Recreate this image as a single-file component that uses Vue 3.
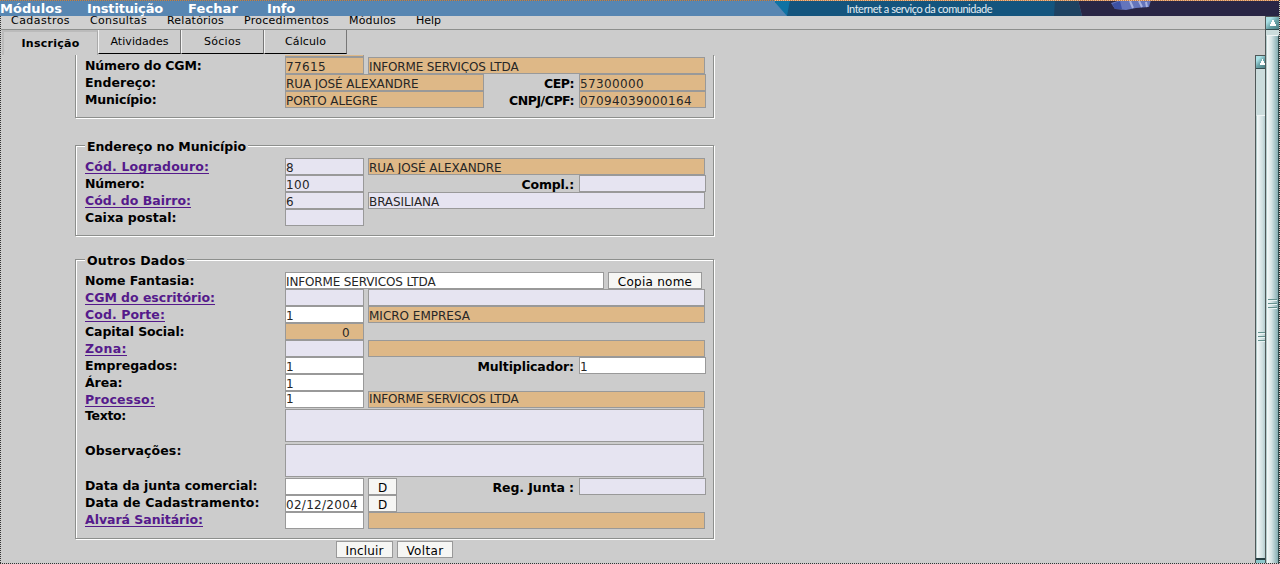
<script setup>
const canvas = document.createElement('canvas').getContext('2d')

// Letter spacing that gives a text the requested advance width.
function fit(text, width, font = '12px "DejaVu Sans"') {
  canvas.font = font
  const gap = (width - canvas.measureText(text).width) / text.length
  return { letterSpacing: gap.toFixed(3) + 'px' }
}
const BOLD = 'bold 12.5px "DejaVu Sans"'
const fitBold = (t, w) => fit(t, w, BOLD)

const modules = [
  { t: 'Módulos', w: 62, c: 'm1' }, { t: 'Instituição', w: 76, c: 'm2' },
  { t: 'Fechar', w: 50, c: 'm3' }, { t: 'Info', w: 28, c: 'm4' },
]
const menu = [
  { t: 'Cadastros', w: 59, c: 'n1' }, { t: 'Consultas', w: 57, c: 'n2' },
  { t: 'Relatórios', w: 57, c: 'n3' }, { t: 'Procedimentos', w: 85, c: 'n4' },
  { t: 'Módulos', w: 47, c: 'n5' }, { t: 'Help', w: 25, c: 'n6' },
]
const tabs = [{ t: 'Atividades', w: 58 }, { t: 'Sócios', w: 37 }, { t: 'Cálculo', w: 41 }]

const groups = [
  {
    cls: 'g1', rows: [
      { l: 'Número do CGM:', w: 116.5, f: [['short tan', '77615', 40], ['wide tan', 'INFORME SERVIÇOS LTDA', 149.5]] },
      { l: 'Endereço:', w: 71, f: [['addr tan', 'RUA JOSÉ ALEXANDRE', 132.5]], side: ['CEP:', 30, 'tan', '57300000', 64] },
      { l: 'Município:', w: 71.5, f: [['addr tan', 'PORTO ALEGRE', 91.5]], side: ['CNPJ/CPF:', 65, 'tan', '07094039000164', 112] },
    ],
  },
  {
    cls: 'g2', legend: 'Endereço no Município', lw: 159, rows: [
      { l: 'Cód. Logradouro:', w: 124, link: true, f: [['short lav', '8', 8], ['wide tan', 'RUA JOSÉ ALEXANDRE', 132.5]] },
      { l: 'Número:', w: 59.5, f: [['short lav', '100', 24]], side: ['Compl.:', 52.5, 'lav', '', 0] },
      { l: 'Cód. do Bairro:', w: 106, link: true, f: [['short lav', '6', 8], ['wide lav', 'BRASILIANA', 70]] },
      { l: 'Caixa postal:', w: 91.5, f: [['short lav', '', 0]] },
    ],
  },
  {
    cls: 'g3', legend: 'Outros Dados', lw: 98, rows: [
      { l: 'Nome Fantasia:', w: 109.5, f: [['name', 'INFORME SERVICOS LTDA', 149.5]], btn: ['Copia nome', 74.5, 'copy'] },
      { l: 'CGM do escritório:', w: 130, link: true, f: [['short lav', '', 0], ['wide lav', '', 0]] },
      { l: 'Cod. Porte:', w: 80, link: true, f: [['short', '1', 8], ['wide tan', 'MICRO EMPRESA', 101]] },
      { l: 'Capital Social:', w: 99.5, f: [['short tan num', '0', 8]] },
      { l: 'Zona:', w: 42, link: true, f: [['short lav', '', 0], ['wide tan', '', 0]] },
      { l: 'Empregados:', w: 92.5, f: [['short', '1', 8]], side: ['Multiplicador:', 96.5, '', '1', 8] },
      { l: 'Área:', w: 37.5, f: [['short', '1', 8]] },
      { l: 'Processo:', w: 70, link: true, cls: 'proc', f: [['short', '1', 8], ['wide tan', 'INFORME SERVICOS LTDA', 149.5]] },
      { l: 'Texto:', w: 41, cls: 'area', f: [['text lav', '', 0]] },
      { l: 'Observações:', w: 96.5, cls: 'area', f: [['text lav', '', 0]] },
      { l: 'Data da junta comercial:', w: 172.5, cls: 'late', f: [['short', '', 0]], btn: ['D', 9, 'date'], side: ['Reg. Junta :', 81.5, 'lav', '', 0] },
      { l: 'Data de Cadastramento:', w: 174.5, cls: 'late', f: [['short', '02/12/2004', 72]], btn: ['D', 9, 'date'] },
      { l: 'Alvará Sanitário:', w: 118, link: true, cls: 'late', f: [['short', '', 0], ['wide tan', '', 0]] },
    ],
  },
]
</script>

<template>
  <div class="page">
    <header class="banner">
      <span v-for="m in modules" :key="m.t" class="mod" :class="m.c" :style="fit(m.t, m.w, 'bold 13px &quot;DejaVu Sans&quot;')">{{ m.t }}</span>
      <svg class="art" width="505" height="16" viewBox="775 0 505 16">
        <path d="M773 0H790V16H787Z" fill="#0f73a4" />
        <path d="M790 0H1060V16H787Z" fill="#14557e" />
        <path d="M1055 0H1078L1082 16H1054Z" fill="#1e4261" />
        <path d="M1078 0H1280V16H1082Z" fill="#292645" />
        <path d="M1111 3L1121 0H1151L1149 7L1136 8L1126 10L1115 9Z" fill="#6475bc" />
        <path d="M1112 4L1120 1L1122 9L1115 9Z" fill="#3c50a3" />
        <path d="M1130 1L1133 8M1139 1L1142 7M1146 2L1147 7" stroke="#a8b3df" stroke-width="2" />
        <path d="M842 .5H935" stroke="#dce8ef" stroke-dasharray="4 5 2 6 5 3" />
        <path d="M942 .5H995" stroke="#2440ee" stroke-dasharray="6 3 3 4" />
      </svg>
      <span class="slogan" :style="fit('Internet a serviço da comunidade', 145.5, '11px Lato')">Internet a serviço da comunidade</span>
      <i class="dots"></i><i class="dots bright"></i>
    </header>

    <nav class="menu">
      <span v-for="m in menu" :key="m.t" :class="m.c" :style="fit(m.t, m.w, '11px &quot;DejaVu Sans&quot;')">{{ m.t }}</span>
    </nav>

    <div class="tabs">
      <div class="tab active"><span :style="fit('Inscrição', 58, 'bold 11px &quot;DejaVu Sans&quot;')">Inscrição</span></div>
      <div v-for="t in tabs" :key="t.t" class="tab"><span :style="fit(t.t, t.w, '11px &quot;DejaVu Sans&quot;')">{{ t.t }}</span></div>
    </div>

    <main class="form">
      <section v-for="g in groups" :key="g.cls" class="group" :class="g.cls">
        <h2 v-if="g.legend" class="legend"><span :style="fitBold(g.legend, g.lw)">{{ g.legend }}</span></h2>
        <div v-else class="previous"><i></i></div>
        <div v-for="r in g.rows" :key="r.l" class="row" :class="r.cls">
          <div class="label"><span :class="{ link: r.link }" :style="fitBold(r.l, r.w)">{{ r.l }}</span></div>
          <div v-for="(f, i) in r.f" :key="i" class="field" :class="f[0]"><span v-if="f[1]" :style="fit(f[1], f[2])">{{ f[1] }}</span></div>
          <button v-if="r.btn" class="btn" :class="r.btn[2]"><span :style="fit(r.btn[0], r.btn[1])">{{ r.btn[0] }}</span></button>
          <div v-if="r.side" class="side">
            <b :style="fitBold(r.side[0], r.side[1])">{{ r.side[0] }}</b>
            <div class="field mid" :class="r.side[2]"><span v-if="r.side[3]" :style="fit(r.side[3], r.side[4])">{{ r.side[3] }}</span></div>
          </div>
        </div>
      </section>
      <div class="actions">
        <button class="btn incluir"><span :style="fit('Incluir', 38)">Incluir</span></button>
        <button class="btn voltar"><span :style="fit('Voltar', 37)">Voltar</span></button>
      </div>
    </main>

    <div class="scroll inner">
      <div class="arrow"><svg width="12" height="12" viewBox="0 0 12 12"><path d="M6 3H7V5H8V7H9V9H4V7H5V5H6Z" fill="#fff" /></svg></div>
      <div class="track"></div>
      <div class="thumb"><i></i><i></i><i></i></div>
      <div class="down"></div>
    </div>
    <div class="scroll outer">
      <div class="arrow"><svg width="13" height="12" viewBox="0 0 13 12"><path d="M6 3H8V5H9V7H10V9H4V7H5V5H6Z" fill="#fff" /></svg></div>
      <div class="track"></div>
      <div class="thumb"><i></i><i></i><i></i></div>
    </div>
    <i class="edge left"></i><i class="edge right"></i><i class="edge bottom"></i>
  </div>
</template>

<style>
body { margin: 0; overflow: hidden; background: #ccc; }
</style>

<style scoped>
.page { position: relative; width: 1280px; height: 564px; overflow: hidden; background: #ccc; color: #000; font: 12px "DejaVu Sans", sans-serif; }
.page * { box-sizing: border-box; }
span, b { white-space: pre; }

.banner { position: relative; display: flex; height: 16px; background: #5786b2; color: #fff; font: bold 13px/18px "DejaVu Sans", sans-serif; }
.m1 { width: 87px; } .m2 { width: 101px; } .m3 { width: 79px; } .m4 { width: 60px; }
.art { position: absolute; right: 0; top: 0; }
.slogan { position: absolute; left: 846.5px; top: 0; font: 11px/17px Lato, sans-serif; color: #e3edf3; }
.dots { position: absolute; inset: 0 0 auto; height: 1px; background: repeating-linear-gradient(90deg, #c68343 0 1px, #5d7590 1px 2px); }
.dots.bright { left: 775px; background: repeating-linear-gradient(90deg, #efb994 0 1px, transparent 1px 2px); }
.dots.bright { mix-blend-mode: normal; }

.menu { display: flex; height: 14px; overflow: hidden; padding-left: 11px; background: #d0d0d0; border-bottom: 1px solid #8d8f8d; font-size: 11px; line-height: 13px; }
.menu span { margin-top: -2px; }
.n1 { width: 79px; } .n2 { width: 77px; } .n3 { width: 77px; } .n4 { width: 105px; } .n5 { width: 67px; }

.tabs { display: flex; height: 25px; padding-left: 2px; }
.tab { width: 83px; height: 24px; border-left: 1px solid #f4f4f4; border-right: 1px solid #777; border-bottom: 1px solid #000; text-align: center; font-size: 11px; line-height: 23px; }
.tab.active { width: 96px; height: 25px; border: 2px solid #bbb; border-right: 1px solid #aaa; border-bottom: 0; font-weight: bold; line-height: 23px; }

.form { width: 640px; height: 508px; margin-left: 75px; overflow: hidden; }
.group { position: relative; border: 1px solid #8d8f8d; margin: 0 1px 1px 0; padding-left: 9px; box-shadow: 1px 1px 0 #fff, inset 1px 1px 0 #fff; }
.g1 { height: 63px; border-top: 0; box-shadow: 1px 1px 0 #fff, inset 1px 0 0 #fff; }
.g2 { height: 91px; margin-top: 27px; padding-top: 12px; }
.g3 { height: 280px; margin-top: 23px; padding-top: 12px; }
.legend { position: absolute; left: 9px; top: -8px; margin: 0; padding: 0 2px; background: #ccc; font-size: 12.5px; line-height: 17px; height: 17px; }
.previous { height: 2px; }
.previous i { display: block; width: 79px; height: 2px; margin-left: 200px; background: linear-gradient(#deb887 50%, #999 50%); border-right: 1px solid #999; }

.row { display: flex; width: 621px; height: 17px; }
.label { width: 200px; font-weight: bold; font-size: 12.5px; line-height: 17px; }
.link { color: #551a8b; text-decoration: underline; text-underline-offset: 2px; text-decoration-thickness: 1px; text-decoration-skip-ink: none; }
.field { height: 17px; border: 1px solid #999; background: #fff; color: #262626; line-height: 18px; overflow: hidden; }
.tan { background: #deb887; }
.lav { background: #e6e4f1; }
.short { width: 79px; margin-right: 4px; }
.wide { width: 337px; }
.addr { width: 199px; }
.name { width: 319px; margin-right: 4px; }
.text { width: 419px; height: 33px; }
.mid { width: 127px; }
.num { text-align: right; padding-right: 13px; }
.side { display: flex; gap: 5px; margin-left: auto; }
.side b { font-size: 12.5px; line-height: 19px; }
.row.area { height: 35px; }
.row.area .label { line-height: 13px; }
.row.proc { height: 18px; }
.row.proc .field { line-height: 14px; }
.row.late .label { line-height: 15px; }
.row.area + .late { margin-top: -1px; }
.btn { height: 17px; padding: 0; border: 1px solid #999; background: #f6f6f4; color: #000; font: 12px/18px "DejaVu Sans", sans-serif; text-align: center; display: block; overflow: hidden; }
.btn span { display: block; }
.copy { width: 94px; }
.date { width: 29px; }
.actions { display: flex; gap: 4px; padding: 1px 0 0 261px; }
.incluir { width: 57px; }
.voltar { width: 56px; }

.scroll { position: absolute; display: flex; flex-direction: column; border-left: 1px solid #505858; border-top: 1px solid #505858; overflow: hidden; background: #cbdcdc; }
.inner { left: 1255px; top: 55px; width: 10px; height: 508px; }
.outer { left: 1265px; top: 16px; width: 14px; height: 548px; }
.arrow { height: 13px; flex: none; border-bottom: 1px solid #354b4f; background: linear-gradient(135deg, #a9e0e5 25%, #6ba3a8 55%, #4c8085); }
.arrow svg { display: block; }
.inner .track { height: 46px; flex: none; }
.outer .track { height: 5px; flex: none; }
.thumb { flex: 1; display: flex; flex-direction: column; gap: 3px; border-left: 1px solid #b4cccc; border-top: 1px solid #f0f5f5; background: linear-gradient(90deg, #f4f8f8, #d7e5e6 40%, #85adb2); }
.inner .thumb { background: linear-gradient(90deg, #f4f8f8, #cfdfe0 70%, #b5cdd0); }
.outer .thumb { border-right: 1px solid #325052; }
.thumb i { height: 1px; margin-left: 1px; background: #66928f; box-shadow: 0 1px 0 #e8f3f3; }
.outer .thumb i { margin-right: 1px; }
.inner .thumb i:first-child { margin-top: 216px; }
.outer .thumb i:first-child { margin-top: 263px; }
.down { height: 5px; flex: none; border-top: 2px solid #263f42; background: #8bc6cb; }

.edge { position: absolute; background: repeating-linear-gradient(#333 0 1px, #ccc 1px 2px); }
.edge.left { left: 0; top: 16px; width: 1px; height: 548px; }
.edge.right { left: 1279px; top: 0; width: 1px; height: 564px; }
.edge.bottom { left: 0; top: 563px; width: 1280px; height: 1px; background: repeating-linear-gradient(90deg, #333 0 1px, #ccc 1px 2px); }
</style>
